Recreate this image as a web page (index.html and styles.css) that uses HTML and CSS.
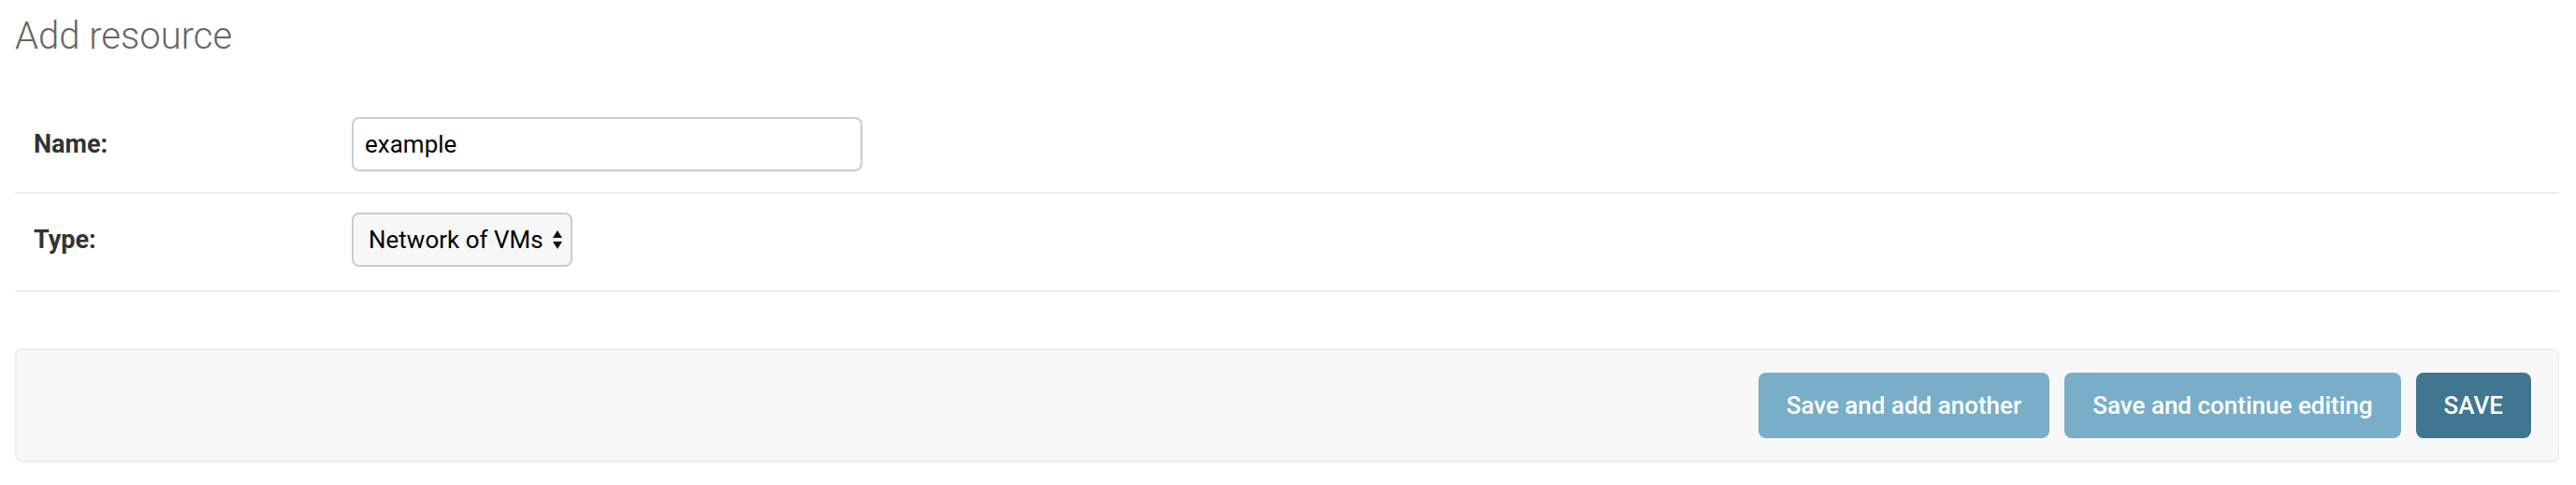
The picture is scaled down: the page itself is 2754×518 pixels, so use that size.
FILE: index.html
```html
<!DOCTYPE html>
<html lang="en">
<head>
<meta charset="utf-8">
<title>Add resource</title>
<link rel="stylesheet" href="styles.css">
</head>
<body>
<div class="content">
  <h1 class="title">Add resource</h1>
  <form class="form">
    <fieldset class="fieldset">
      <div class="form-row">
        <label class="label" for="id_name">Name:</label>
        <input class="text-input" id="id_name" type="text" value="example">
      </div>
      <div class="form-row form-row-last">
        <label class="label" for="id_type">Type:</label>
        <div class="select-wrap">
          <select class="select" id="id_type">
            <option>Network of VMs</option>
          </select>
          <svg class="select-arrows" width="12" height="22" viewBox="0 0 12 22" aria-hidden="true">
            <path d="M6 1 L11 9 L1 9 Z" fill="#111"/>
            <path d="M6 21 L11 13 L1 13 Z" fill="#111"/>
          </svg>
        </div>
      </div>
    </fieldset>
    <div class="submit-row">
      <button type="button" class="btn">Save and add another</button>
      <button type="button" class="btn">Save and continue editing</button>
      <button type="button" class="btn btn-default">SAVE</button>
    </div>
  </form>
</div>
</body>
</html>
```

FILE: styles.css
```css
html, body {
  margin: 0;
  padding: 0;
  background: #fff;
}

body {
  font-family: Roboto, "Liberation Sans", Arial, sans-serif;
  color: #333;
}

.content {
  padding: 15px 18px 0 16px;
}

.title {
  margin: 0 0 43px 0;
  font-size: 40px;
  font-weight: 300;
  line-height: 47px;
  color: #666;
}

.form {
  margin: 0;
}

.fieldset {
  margin: 0;
  padding: 0;
  border: none;
}

.form-row {
  display: flex;
  align-items: center;
  padding: 20px 20px 22px 20px;
  border-bottom: 2px solid #eee;
}

.form-row-last {
  padding-bottom: 25px;
}

.label {
  width: 340px;
  flex: none;
  font-size: 27px;
  font-weight: 700;
  color: #333;
  line-height: 1;
}

.text-input {
  box-sizing: border-box;
  width: 546px;
  height: 58px;
  margin: 0;
  padding: 0 12px;
  border: 2px solid #ccc;
  border-radius: 8px;
  background: #fff;
  font-family: Roboto, "Liberation Sans", Arial, sans-serif;
  font-size: 26px;
  color: #000;
  outline: none;
}

.select-wrap {
  position: relative;
  display: inline-block;
}

.select {
  box-sizing: border-box;
  width: 236px;
  height: 58px;
  margin: 0;
  padding: 0 20px 0 16px;
  border: 2px solid #ccc;
  border-radius: 8px;
  background: #f7f7f7;
  font-family: Roboto, "Liberation Sans", Arial, sans-serif;
  font-size: 26px;
  color: #000;
  -webkit-appearance: none;
  appearance: none;
  outline: none;
}

.select-arrows {
  position: absolute;
  right: 10px;
  top: 18px;
  pointer-events: none;
}

.submit-row {
  display: flex;
  justify-content: flex-end;
  gap: 16px;
  margin-top: 60px;
  padding: 24px 28px;
  background: #f8f8f8;
  border: 2px solid #eee;
  border-radius: 8px;
}

.btn {
  height: 70px;
  margin: 0;
  padding: 0 30px;
  border: none;
  border-radius: 8px;
  background: #79aec8;
  color: #fff;
  font-family: Roboto, "Liberation Sans", Arial, sans-serif;
  font-size: 26px;
  font-weight: 500;
  cursor: pointer;
}

.btn-default {
  background: #417690;
}
```
